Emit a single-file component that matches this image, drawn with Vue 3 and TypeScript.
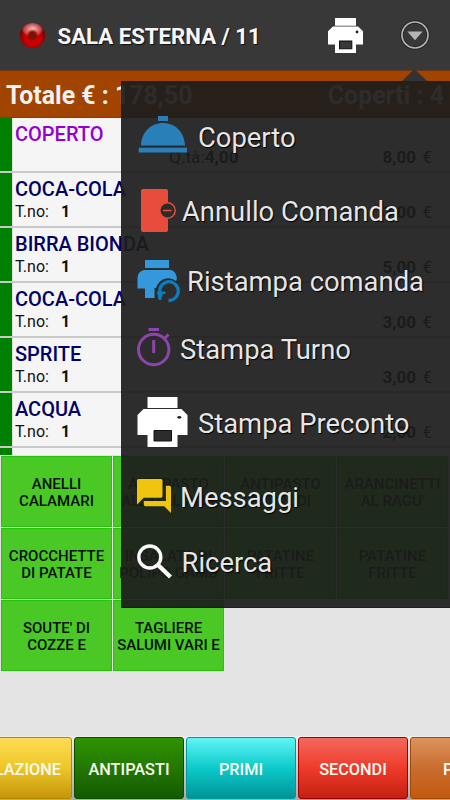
<script setup lang="ts">
interface OrderLine {
  name: string
  turn?: number
  qty?: string
  price: string
}

interface Category {
  label: string
  tone: string
}

const lines: OrderLine[] = [
  { name: 'COPERTO', qty: '4,00', price: '8,00' },
  { name: 'COCA-COLA', turn: 1, price: '3,00' },
  { name: 'BIRRA BIONDA', turn: 1, price: '5,00' },
  { name: 'COCA-COLA', turn: 1, price: '3,00' },
  { name: 'SPRITE', turn: 1, price: '3,00' },
  { name: 'ACQUA', turn: 1, price: '2,00' },
]

const dishes: string[][] = [
  ['ANELLI', 'CALAMARI'],
  ['ANTIPASTO', "ALL'ITALIANA"],
  ['ANTIPASTO', 'DI CRUDI'],
  ['ARANCINETTI', "AL RAGU'"],
  ['CROCCHETTE', 'DI PATATE'],
  ['INSALATA DI', 'POLIPO GAMB'],
  ['PATATINE', 'FRITTE'],
  ['PATATINE', 'FRITTE'],
  ["SOUTE' DI", 'COZZE E'],
  ['TAGLIERE', 'SALUMI VARI E'],
]

const categories: Category[] = [
  { label: 'COLAZIONE', tone: 'yellow' },
  { label: 'ANTIPASTI', tone: 'green' },
  { label: 'PRIMI', tone: 'cyan' },
  { label: 'SECONDI', tone: 'red' },
  { label: 'PIZZE', tone: 'orange' },
]
</script>

<template>
  <div class="screen">
    <header class="topbar">
      <span class="led"></span>
      <h1 class="title">SALA ESTERNA / 11</h1>
      <svg class="print" width="35" height="35" viewBox="0 0 50 50">
        <path fill="#fff" d="M10 0h30v11H10zM7 12h36l7 7v19H40v12H10V38H0V19z" />
        <path fill="#383838" stroke="#111" stroke-width="1.5" d="M16.5 33h17.5v11H16.5z" />
        <circle cx="41.5" cy="20" r="2" fill="#222" />
      </svg>
      <svg class="more" width="30" height="30" viewBox="0 0 30 30">
        <circle cx="15" cy="15" r="13" fill="none" stroke="#222" stroke-width="3.4" />
        <circle cx="15" cy="15" r="13" fill="none" stroke="#b4b4b4" stroke-width="1.7" />
        <path d="M7.4 11.6h15.2L15 20.2z" fill="#b4b4b4" />
      </svg>
    </header>

    <section class="totals">
      <span>Totale € : 178,50</span>
      <span>Coperti : 4</span>
    </section>

    <section class="orders">
      <article v-for="(line, i) in lines" :key="i" class="line">
        <div class="name" :class="{ cover: !line.turn }">{{ line.name }}</div>
        <div class="detail">
          <span v-if="line.turn" class="turn">T.no: <b>{{ line.turn }}</b></span>
          <span v-if="line.qty" class="qty">Q.tà:<b>{{ line.qty }}</b></span>
          <span class="price"><b>{{ line.price }}</b><span>€</span></span>
        </div>
      </article>
      <article class="line"></article>
    </section>

    <section class="dishes">
      <button v-for="(dish, i) in dishes" :key="i" class="dish">
        <span v-for="part in dish" :key="part">{{ part }}</span>
      </button>
    </section>

    <footer class="tabs">
      <button v-for="c in categories" :key="c.label" class="tab" :class="c.tone">{{ c.label }}</button>
    </footer>

    <span class="pointer"></span>
    <nav class="menu">
      <div class="item i1">
        <svg width="61" height="40" viewBox="0 0 61 40" fill="#2980b9">
          <path d="M21 2h10v5H21zM1.700 33.700h48.300v4.700H1.700zM4 31.600C4.500 18 14 9 26 9s21.500 9 22 22.600z" />
        </svg>
        <span>Coperto</span>
      </div>
      <div class="item i2">
        <svg width="45" height="46" viewBox="0 0 45 46">
          <rect x="4" y="2" width="27" height="43" rx="2" fill="#e74c3c" />
          <circle cx="30.500" cy="23.500" r="7.700" fill="#2b2b2b" stroke="#e74c3c" stroke-width="1.500" />
          <path d="M26 23.500h8.500" stroke="#e74c3c" stroke-width="1.500" />
        </svg>
        <span>Annullo Comanda</span>
      </div>
      <div class="item i3">
        <svg width="50" height="44" viewBox="0 0 50 44">
          <path fill="#3498db" d="M8 1h24v8H8zM7 11h27q5 1 6 8.500L39 22C31 16 22 20 19 29H17.500V39h-9.500V29.500H.5V19q.500-7 6.500-8z" />
          <path fill="none" stroke="#0b7dc0" stroke-width="3.200" d="M24.500 37.500A9.300 9.300 0 1 1 31.500 41.300" />
          <path fill="#0b7dc0" d="M19.800 32.500h8.700v2.500h-3.200l-1 6h-2.500z" />
        </svg>
        <span>Ristampa comanda</span>
      </div>
      <div class="item i4">
        <svg width="43" height="44" viewBox="0 0 43 44" fill="none" stroke="#8e44ad">
          <circle cx="16.700" cy="24.500" r="15.200" stroke-width="3" />
          <path stroke-width="3" d="M11.500 4.500h10.500M16.700 15v13M27.500 13.500l4-4" />
        </svg>
        <span>Stampa Turno</span>
      </div>
      <div class="item i5">
        <svg width="61" height="50" viewBox="-.5 0 61 50">
          <path fill="#fff" d="M10 0h30v11H10zM6 12h38l6 6v20H40v12H10V38H0V18z" />
          <path fill="#2c2c2c" stroke="#111" d="M16.500 33.500h17.500v10.500H16.500z" />
          <ellipse cx="41.800" cy="20.300" rx="2" ry="1.400" fill="#222" />
        </svg>
        <span>Stampa Preconto</span>
      </div>
      <div class="item i6">
        <svg width="43" height="36" viewBox="0 0 43 36">
          <path fill="#f1c40f" transform="translate(-3.400 -2.400) scale(1.700)" d="M21 6h-2v9H6v2c0 .550.450 1 1 1h11l4 4V7c0-.550-.450-1-1-1zm-4 6V3c0-.550-.450-1-1-1H3c-.550 0-1 .450-1 1v14l4-4h10c.550 0 1-.450 1-1z" />
        </svg>
        <span>Messaggi</span>
      </div>
      <div class="item i7">
        <svg width="44.500" height="38" viewBox="0 0 44.500 38" fill="none" stroke="#fafafa">
          <circle cx="12.800" cy="14" r="11" stroke-width="3.400" />
          <path stroke-width="4.400" d="M20.500 21.500l13 12.500" />
        </svg>
        <span>Ricerca</span>
      </div>
    </nav>
  </div>
</template>

<style>
body {
  background: #e4e4e4;
}
</style>

<style scoped>
.screen {
  position: relative;
  display: flex;
  flex-direction: column;
  width: 450px;
  height: 800px;
  overflow: hidden;
  background: #e4e4e4;
  font-family: Roboto, "Liberation Sans", sans-serif;
}
.topbar {
  display: flex;
  align-items: center;
  height: 70px;
  padding: 0 20px;
  box-sizing: border-box;
  background: #383838;
}
.led {
  width: 25px;
  height: 25px;
  border-radius: 50%;
  background:
    radial-gradient(circle at 50% 48%, #7c1008 0 3px, rgba(124, 16, 8, 0) 6px),
    radial-gradient(ellipse 11px 8px at 50% 24%, rgba(255, 225, 225, .85), rgba(240, 120, 120, .5) 80%, rgba(200, 0, 0, 0)),
    radial-gradient(circle at 50% 60%, #c80000 40%, #8c0000 62%, #5a0000 72%);
}
.title {
  margin: 2px 0 0 12.500px;
  font-size: 22.200px;
  line-height: 26px;
  font-weight: 700;
  color: #f6f6f6;
  text-shadow: 1px 1px 1px #111;
  white-space: nowrap;
}
.print {
  margin-left: auto;
}
.more {
  margin-left: 37px;
  margin-right: .500px;
}
.totals {
  display: flex;
  justify-content: space-between;
  height: 48px;
  box-sizing: border-box;
  border-top: 1px solid #6d3412;
  border-bottom: 1px solid #8a3c08;
  padding: 0 6px;
  background: #a04400;
  color: #f2f2f2;
  font-size: 24.900px;
  line-height: 50px;
  font-weight: 700;
}
.orders {
  height: 337px;
  overflow: hidden;
}
.line {
  height: 53px;
  box-sizing: border-box;
  padding: 5px 18px 0 3px;
  margin-bottom: 2px;
  border-left: 12px solid #008000;
  background: #f5f5f5;
  box-shadow: inset 1px 0 #ddd, 0 2px #cacaca;
}
.name {
  font-size: 20px;
  line-height: 23px;
  font-weight: 500;
  color: #000066;
}
.name.cover {
  color: #9400d3;
}
.detail {
  display: flex;
  font-size: 17px;
  line-height: 22px;
  color: #111;
}
.turn {
  font-size: 16px;
}
.turn b {
  margin-left: 8px;
}
.qty {
  margin-left: 154px;
  font-size: 17.300px;
}
.price {
  display: flex;
  gap: 6.500px;
  margin-left: auto;
}
.dishes {
  display: grid;
  grid-template-columns: repeat(4, 111px);
  grid-auto-rows: 71px;
  gap: 1px;
  padding: 1px;
}
.dish {
  display: flex;
  flex-direction: column;
  align-items: center;
  justify-content: center;
  padding: 3px 0 0;
  border: 1px solid #25c30c;
  background: #4ac926;
  font-family: inherit;
  font-size: 15px;
  line-height: 17.500px;
  font-weight: 500;
  color: #050f02;
  white-space: nowrap;
}
.tabs {
  display: flex;
  gap: 2px;
  height: 64px;
  box-sizing: border-box;
  padding-top: 1px;
  padding-bottom: 1px;
  margin-top: auto;
  margin-left: -38px;
  width: 560px;
  background: linear-gradient(#eee, #aaa);
}
.tab {
  flex: none;
  width: 110px;
  padding: 3px 0 0;
  border: 1px solid;
  border-radius: 3px;
  font-family: inherit;
  font-size: 16.300px;
  font-weight: 500;
  color: #fbfbf3;
}
.yellow {
  border-color: #b08a00;
  background: linear-gradient(#ffdc55, #edc629 50%, #c4960a);
}
.green {
  border-color: #0b4d00;
  background: linear-gradient(#2f9300, #237800 50%, #145a00);
}
.cyan {
  border-color: #009a9c;
  background: linear-gradient(#60f5f5, #0ccaca 50%, #009496);
}
.red {
  border-color: #a00000;
  background: linear-gradient(#f4685c, #ee3b2b 50%, #c52010);
}
.orange {
  border-color: #a04a08;
  background: linear-gradient(#dc935c, #ca6c30 50%, #c05a10);
}
.pointer {
  position: absolute;
  left: 402px;
  top: 69px;
  width: 25px;
  height: 12px;
  background: #333;
  clip-path: polygon(50% 0, 100% 100%, 0 100%);
}
.menu {
  position: absolute;
  left: 121px;
  top: 81px;
  width: 329px;
  height: 527px;
  box-sizing: border-box;
  padding: 17px 0 0 16px;
  background: rgba(28, 28, 28, .925);
  box-shadow: inset 0 -1px #1c1c1c;
}
.item {
  display: flex;
  align-items: center;
  font-size: 27.400px;
  line-height: 32px;
  color: #e6e6e6;
  white-space: nowrap;
  text-shadow: 0 0 1px #000, 1px 1px 1px #000;
}
.item svg {
  flex: none;
}
.i1 { height: 79px; }
.i2 { height: 70px; }
.i3 { height: 69px; }
.i4 { height: 68px; }
.i5 { height: 79px; }
.i6 { height: 69px; }
.i7 { height: 62px; }
.i1 svg { margin-bottom: 7px; }
.i2 svg { margin-bottom: 4px; }
.i3 svg { margin-bottom: 2px; }
.i4 svg { margin-bottom: 6px; }
.i5 svg { margin-bottom: 3px; }
.i6 svg { margin-bottom: 3px; }
.i7 svg { margin-bottom: 2px; }
</style>
